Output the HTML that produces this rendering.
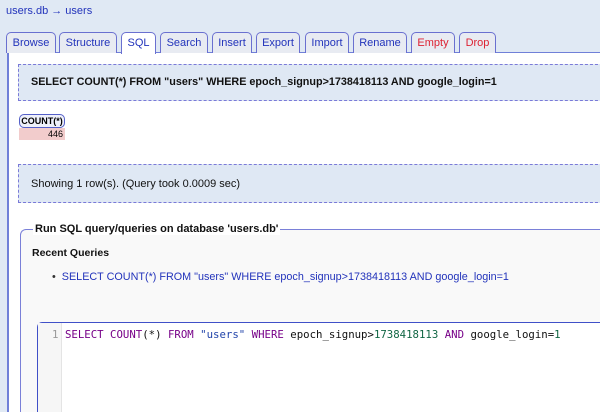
<!DOCTYPE html>
<html style="overflow:hidden;width:600px;height:412px"><head><style>
*{margin:0;padding:0;box-sizing:border-box}
body{width:600px;height:412px;overflow:hidden;background:#e0e9f4;font-family:"Liberation Sans",Arial,sans-serif;position:relative}
.a{position:absolute}
.tab{position:absolute;top:32px;height:21px;border:1px solid #6a70d0;border-bottom:none;border-radius:5px 5px 0 0;background:#e8ebf2;color:#2233bb;font-size:11px;text-align:center;line-height:20px}
.tab.r{color:#dd2233}
.dash{position:absolute;left:18px;width:590px;border:1px dashed #7a7ad8;border-right:none;background:#dfe8f4}
.mono{font-family:"DejaVu Sans Mono","Liberation Mono",monospace;font-size:10.7px}
</style></head><body>
<div class="a" style="left:6px;top:5px;font-size:11px;color:#2233bb">users.db → users</div>
<div class="a" style="left:7px;top:52px;width:593px;height:360px;background:#fff;border-left:2px solid #7080d8;border-top:1px solid #7080d8"></div>
<div class="tab" style="left:6px;width:50px">Browse</div>
<div class="tab" style="left:59px;width:58px">Structure</div>
<div class="tab" style="left:121px;width:35px;height:22px;background:#fff;z-index:2">SQL</div>
<div class="tab" style="left:160px;width:48px">Search</div>
<div class="tab" style="left:212px;width:40px">Insert</div>
<div class="tab" style="left:256px;width:44px">Export</div>
<div class="tab" style="left:305px;width:44px">Import</div>
<div class="tab" style="left:353px;width:54px">Rename</div>
<div class="tab r" style="left:411px;width:44px">Empty</div>
<div class="tab r" style="left:459px;width:37px">Drop</div>
<div class="dash" style="top:64px;height:37px;font-size:10.8px;font-weight:bold;padding:11px 0 0 12px;color:#111">SELECT COUNT(*) FROM "users" WHERE epoch_signup&gt;1738418113 AND google_login=1</div>
<div class="a" style="left:19px;top:114px;width:46px;height:14px;border:1.5px solid #5560c8;border-radius:5px;font-size:9px;font-weight:bold;text-align:center;line-height:12px;background:#eef0fa">COUNT(*)</div>
<div class="a" style="left:19px;top:128px;width:46px;height:12px;background:#f2cccc;font-size:9px;text-align:right;padding-right:2px;line-height:12px">446</div>
<div class="dash" style="top:164px;height:39px;font-size:11px;padding:13px 0 0 12px;color:#111">Showing 1 row(s). (Query took 0.0009 sec)</div>
<div class="a" style="left:20px;top:229px;width:580px;height:190px;border:1.5px solid #7a80d8;border-right:none;border-radius:6px 0 0 0;background:#f9f9f9"></div>
<div class="a" style="left:33px;top:223px;font-size:11px;font-weight:bold;background:#fff;padding:0 2px;color:#111">Run SQL query/queries on database 'users.db'</div>
<div class="a" style="left:32px;top:247px;font-size:10.5px;font-weight:bold;color:#111">Recent Queries</div>
<div class="a" style="left:52px;top:271px;font-size:10.8px;color:#2233bb"><span style="color:#333">•</span>&nbsp; SELECT COUNT(*) FROM "users" WHERE epoch_signup&gt;1738418113 AND google_login=1</div>
<div class="a" style="left:37px;top:322px;width:563px;height:100px;border:1.5px solid #4050c8;border-right:none;border-radius:5px 0 0 0;background:#fff"></div>
<div class="a" style="left:38px;top:323px;width:24px;height:99px;background:#f6f6f6;border-right:1px solid #e4e4e4"></div>
<div class="a mono" style="left:52px;top:328px;color:#999">1</div>
<div class="a mono" style="left:65px;top:328px;color:#111;white-space:pre"><span style="color:#770088">SELECT</span> <span style="color:#770088">COUNT</span>(*) <span style="color:#770088">FROM</span> <span style="color:#2244aa">"users"</span> <span style="color:#770088">WHERE</span> epoch_signup&gt;<span style="color:#116644">1738418113</span> <span style="color:#770088">AND</span> google_login=<span style="color:#116644">1</span></div>
</body></html>
